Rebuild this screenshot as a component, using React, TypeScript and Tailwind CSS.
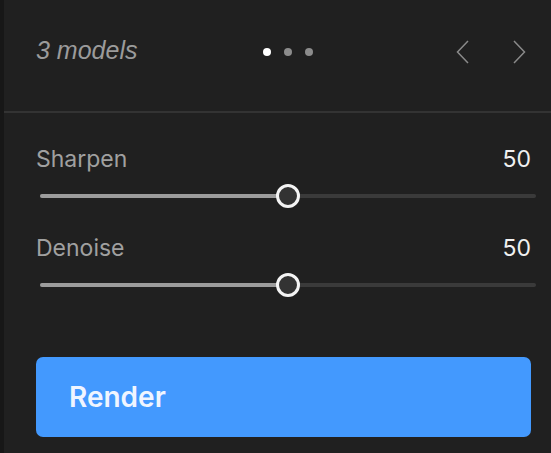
import { useState } from "react";

function Chevron({ dir }: { dir: "left" | "right" }) {
  return (
    <svg width="13" height="24" viewBox="0 0 13 24" fill="none" className="text-[#8a8a8a]">
      <polyline
        points={dir === "left" ? "12,1 1.5,12 12,23" : "1,1 11.5,12 1,23"}
        stroke="currentColor"
        strokeWidth="1.5"
        strokeLinejoin="miter"
      />
    </svg>
  );
}

function Slider({ label, value }: { label: string; value: number }) {
  return (
    <div>
      <div className="flex items-center justify-between text-[23px] leading-[28px]">
        <span className="text-[#a0a0a0]">{label}</span>
        <span className="text-[#f0f0f0]">{value}</span>
      </div>
      {/* track + thumb */}
      <div className="relative mt-[11px] ml-[4px] mr-[-5px] h-6 flex items-center">
        <div className="h-1 w-full rounded-full bg-[#3a3a3a]" />
        <div className="absolute left-0 h-1 rounded-full bg-[#9c9c9c]" style={{ width: `${value}%` }} />
        <div
          className="absolute top-0 w-6 h-6 -ml-3 rounded-full border-[3px] border-[#f4f4f4] bg-[#333333]"
          style={{ left: `${value}%` }}
        />
      </div>
    </div>
  );
}

export default function App() {
  const [page] = useState(0);

  return (
    <div className="flex w-[551px] h-[453px] bg-[#202020] font-['Inter',sans-serif]">
      {/* dark edge */}
      <div className="w-1 bg-[#171717]" />

      <div className="flex-1 flex flex-col">
        {/* Header */}
        <div className="h-[111px] pb-[7px] pl-8 pr-[25px] flex items-center">
          <span className="w-[227px] mb-[4px] text-[25px] leading-none italic text-[#9b9b9b] font-['Liberation_Sans',Arial,sans-serif]">
            3 models
          </span>
          <div className="flex items-center gap-[13px]">
            {[0, 1, 2].map((i) => (
              <div
                key={i}
                className={`w-2 h-2 rounded-full ${i === page ? "bg-white" : "bg-[#8c8c8c]"}`}
              />
            ))}
          </div>
          <div className="ml-auto flex items-center gap-[44px]">
            <Chevron dir="left" />
            <Chevron dir="right" />
          </div>
        </div>

        <div className="h-[2px] bg-[#333333]" />

        {/* Adjustments */}
        <div className="pl-8 pr-5 pt-8 flex flex-col gap-[26px]">
          <Slider label="Sharpen" value={50} />
          <Slider label="Denoise" value={50} />
        </div>

        <div className="pl-8 pr-5 mt-[60px]">
          <button className="w-full h-20 rounded-[7px] bg-[#4399fe] pl-[33px] flex items-center text-[28px] font-semibold text-[#f0f5ff]">
            Render
          </button>
        </div>
      </div>
    </div>
  );
}
